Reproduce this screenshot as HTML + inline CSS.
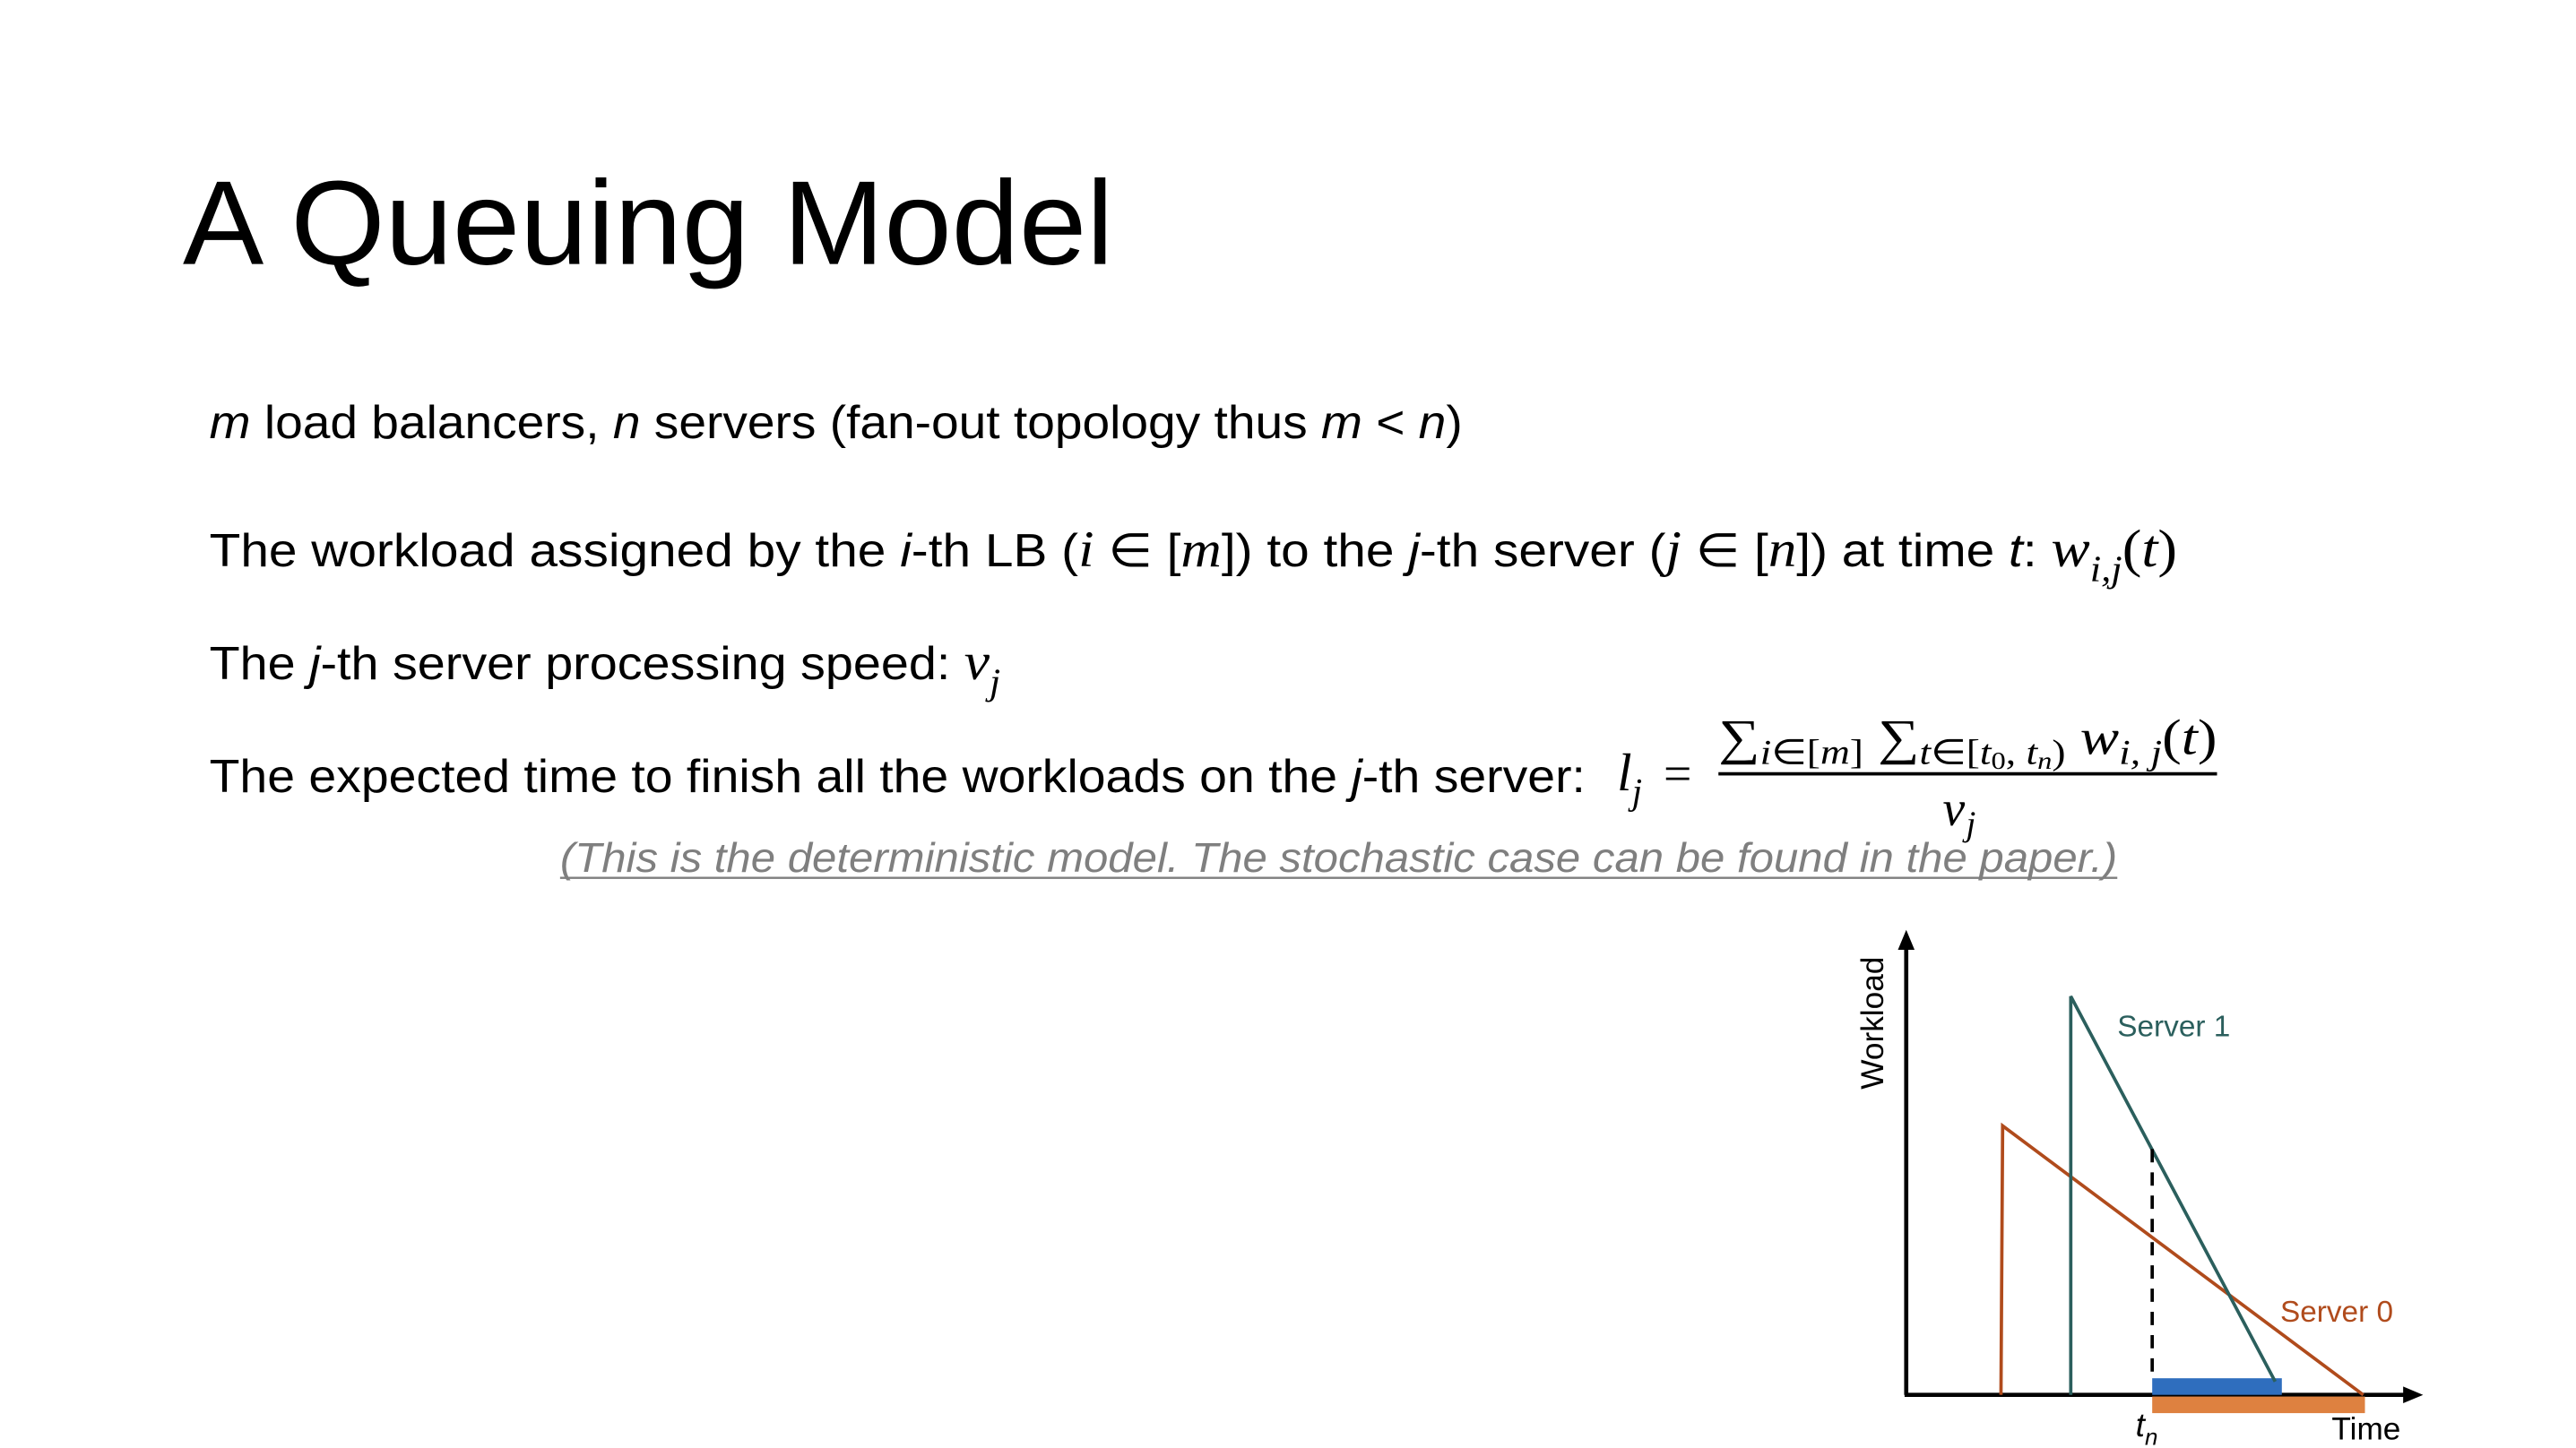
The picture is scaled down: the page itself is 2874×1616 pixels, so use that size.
<!DOCTYPE html>
<html><head><meta charset="utf-8"><style>
html,body{margin:0;padding:0;background:#fff;width:2874px;height:1616px;overflow:hidden}
svg{display:block}
.s{font-family:"Liberation Sans",sans-serif}
.m{font-family:"Liberation Serif",serif;font-style:italic}
</style></head><body>
<svg width="2874" height="1616" viewBox="0 0 1550 872" preserveAspectRatio="none" xmlns="http://www.w3.org/2000/svg">
<text class="s" x="110" y="159" font-size="72" textLength="560" lengthAdjust="spacingAndGlyphs">A Queuing Model</text>

<text class="s" x="126" y="264" font-size="28" textLength="754" lengthAdjust="spacingAndGlyphs"><tspan font-style="italic">m</tspan> load balancers, <tspan font-style="italic">n</tspan> servers (fan-out topology thus <tspan font-style="italic">m</tspan> &lt; <tspan font-style="italic">n</tspan>)</text>

<text class="s" x="126" y="341" font-size="28" textLength="1184" lengthAdjust="spacingAndGlyphs">The workload assigned by the <tspan font-style="italic">i</tspan>-th LB (<tspan class="m" font-size="31">i</tspan> ∈ [<tspan class="m" font-size="31">m</tspan>]) to the <tspan font-style="italic">j</tspan>-th server (<tspan class="m" font-size="31">j</tspan> ∈ [<tspan class="m" font-size="31">n</tspan>]) at time <tspan font-style="italic">t</tspan>: <tspan class="m" font-size="32">w</tspan><tspan class="m" font-size="22" dy="9">i,j</tspan><tspan font-family="Liberation Serif" font-size="32" dy="-9">(</tspan><tspan class="m" font-size="32">t</tspan><tspan font-family="Liberation Serif" font-size="32">)</tspan></text>

<text class="s" x="126" y="409" font-size="28" textLength="476" lengthAdjust="spacingAndGlyphs">The <tspan font-style="italic">j</tspan>-th server processing speed: <tspan class="m" font-size="32">v</tspan><tspan class="m" font-size="22" dy="9">j</tspan></text>

<text class="s" x="126" y="477" font-size="28" textLength="828" lengthAdjust="spacingAndGlyphs">The expected time to finish all the workloads on the <tspan font-style="italic">j</tspan>-th server:</text>
<text class="m" x="973" y="476" font-size="32">l</text><text class="m" x="982" y="484" font-size="22">j</text>
<text font-family="Liberation Serif" x="1001" y="476" font-size="30">=</text>
<text font-family="Liberation Serif" x="1034" y="454" font-size="30" textLength="300" lengthAdjust="spacingAndGlyphs">∑<tspan class="m" font-size="21" dy="6">i</tspan><tspan font-size="21">∈[</tspan><tspan class="m" font-size="21">m</tspan><tspan font-size="21">]</tspan><tspan font-size="30" dy="-6"> ∑</tspan><tspan class="m" font-size="21" dy="6">t</tspan><tspan font-size="21">∈[</tspan><tspan class="m" font-size="21">t</tspan><tspan font-size="15" dy="3">0</tspan><tspan font-size="21" dy="-3">, </tspan><tspan class="m" font-size="21">t</tspan><tspan class="m" font-size="15" dy="3">n</tspan><tspan font-size="21" dy="-3">)</tspan><tspan class="m" font-size="30" dy="-6"> w</tspan><tspan class="m" font-size="21" dy="6">i, j</tspan><tspan font-size="30" dy="-6">(</tspan><tspan class="m" font-size="30">t</tspan><tspan font-size="30">)</tspan></text>
<rect x="1034" y="465" width="300" height="2" fill="#000"/>
<text class="m" x="1169" y="497" font-size="30">v</text><text class="m" x="1183" y="503" font-size="21">j</text>

<text x="337" y="525" font-family="Liberation Sans" font-style="italic" font-size="25" fill="#7f7f7f" textLength="937" lengthAdjust="spacingAndGlyphs">(This is the deterministic model. The stochastic case can be found in the paper.)</text>
<rect x="337" y="528" width="937" height="1.3" fill="#7f7f7f"/>

<!-- chart -->
<line x1="1147" y1="840" x2="1147" y2="570" stroke="#000" stroke-width="2.5"/>
<polygon points="1142,572 1152,572 1147,560" fill="#000"/>
<line x1="1146" y1="840" x2="1448" y2="840" stroke="#000" stroke-width="2.5"/>
<polygon points="1446,835 1446,845 1458,840" fill="#000"/>
<rect x="1295" y="830" width="78" height="10" fill="#2f6ebe"/>
<rect x="1295" y="841" width="128" height="10" fill="#de8140"/>
<polyline points="1204,840 1205,678 1422,840" fill="none" stroke="#b04b1c" stroke-width="2"/>
<polyline points="1246,840 1246,600 1369,832" fill="none" stroke="#2b5f5d" stroke-width="2"/>
<line x1="1295" y1="692" x2="1295" y2="832" stroke="#000" stroke-width="2" stroke-dasharray="8,6"/>
<text class="s" x="1274" y="624" font-size="18" fill="#2b5f5d">Server 1</text>
<text class="s" x="1372" y="796" font-size="18" fill="#b04b1c">Server 0</text>
<text class="s" x="1403" y="867" font-size="19">Time</text>
<text class="s" font-style="italic" x="1285" y="865" font-size="20">t<tspan font-size="14" dy="5">n</tspan></text>
<text class="s" font-size="19" transform="translate(1133,656) rotate(-90)">Workload</text>
</svg>
</body></html>
